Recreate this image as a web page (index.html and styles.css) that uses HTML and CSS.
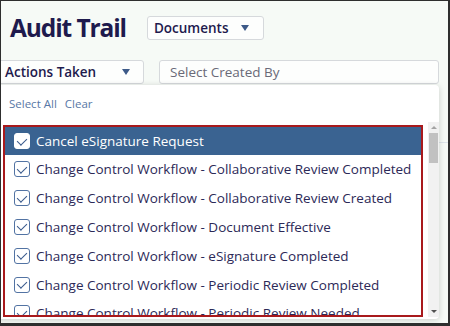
FILE: index.html
```html
<!DOCTYPE html>
<html lang="en">
<head>
  <meta charset="UTF-8" />
  <title>Audit Trail</title>
  <link rel="stylesheet" href="styles.css">
</head>
<body>
  <div class="screen">
    <div class="header">
      <h1>Audit Trail</h1>
      <div class="select select-docs">Documents <span class="caret"></span></div>
    </div>

    <div class="filters">
      <div class="select select-actions">Actions Taken <span class="caret"></span></div>
      <div class="select select-user">Select Created By</div>
    </div>

    <div class="table-line"></div>

    <div class="dropdown">
      <div class="links">
        <a href="#">Select All</a>
        <a href="#">Clear</a>
      </div>
      <div class="list-wrap">
        <ul class="list">
          <li class="active"><span class="box"></span>Cancel eSignature Request</li>
          <li><span class="box"></span>Change Control Workflow - Collaborative Review Completed</li>
          <li><span class="box"></span>Change Control Workflow - Collaborative Review Created</li>
          <li><span class="box"></span>Change Control Workflow - Document Effective</li>
          <li><span class="box"></span>Change Control Workflow - eSignature Completed</li>
          <li><span class="box"></span>Change Control Workflow - Periodic Review Completed</li>
          <li><span class="box"></span>Change Control Workflow - Periodic Review Needed</li>
        </ul>
        <div class="scrollbar">
          <span class="arrow up"></span>
          <span class="thumb"></span>
          <span class="arrow down"></span>
        </div>
      </div>
    </div>
  </div>
</body>
</html>
```

FILE: styles.css
```css
* { box-sizing: border-box; margin: 0; padding: 0; }
body {
  background: #2e2e2e;
  width: 450px;
  height: 326px;
  overflow: hidden;
  font-family: 'Open Sans', sans-serif;
}
.screen {
  position: relative;
  width: 447px;
  height: 322px;
  margin: 1px 2px 3px 1px;
  background: #f6faf6;
  overflow: hidden;
}
.header {
  display: flex;
  align-items: center;
  padding: 9px 0 0 9px;
  height: 44px;
}
h1 {
  font-size: 24.5px;
  font-weight: 700;
  color: #1e1a4d;
  letter-spacing: -1.1px;
  line-height: 32px;
  margin-right: 21px;
}
.select {
  display: flex;
  align-items: center;
  height: 24px;
  background: #fdfefd;
  border: 1px solid #d6d9dc;
  border-radius: 3px;
  font-size: 13.5px;
  color: #1e1a4d;
}
.caret {
  margin-left: auto;
  width: 0;
  height: 0;
  border-left: 4px solid transparent;
  border-right: 4px solid transparent;
  border-top: 6px solid #3d5a88;
}
.select-docs {
  width: 117px;
  padding: 0 14px 0 6px;
  font-weight: 600;
}
.filters {
  display: flex;
  margin-top: 15px;
}
.select-actions {
  width: 149px;
  margin-left: -6px;
  padding: 0 13px 0 9px;
  font-weight: 600;
}
.select-user {
  width: 280px;
  margin-left: 15px;
  padding-left: 10px;
  color: #6a6a78;
}
.table-line {
  position: absolute;
  top: 141px;
  left: 0;
  width: 100%;
  border-top: 1px solid #dde4ea;
}
.dropdown {
  position: absolute;
  top: 84px;
  left: -6px;
  width: 444px;
  height: 234px;
  background: #fff;
  border-radius: 4px;
  box-shadow: 0 1px 6px rgba(0, 0, 0, 0.18);
}
.links {
  display: flex;
  gap: 8px;
  height: 37px;
  padding-left: 14px;
  align-items: center;
  font-size: 11.5px;
}
.links a {
  color: #5878a6;
  text-decoration: none;
}
.list-wrap {
  display: flex;
  height: 195px;
}
.list {
  list-style: none;
  width: 420px;
  height: 192px;
  margin: 3px 0 0 8px;
  border: 2px solid #a8191c;
  overflow: hidden;
}
.list li {
  display: flex;
  align-items: center;
  height: 28.8px;
  padding-left: 9px;
  font-size: 13.5px;
  color: #2c2957;
  white-space: nowrap;
}
.list li.active {
  height: 28px;
  background: #3a6391;
  color: #fff;
}
.box {
  position: relative;
  flex: none;
  width: 16px;
  height: 16px;
  margin-right: 6px;
  border: 1.5px solid #5273a3;
  border-radius: 3px;
  background: #fff;
}
.box::after {
  content: '';
  position: absolute;
  left: 3.5px;
  top: 1.5px;
  width: 5px;
  height: 8px;
  border-right: 1.5px solid #3a5a8c;
  border-bottom: 1.5px solid #3a5a8c;
  transform: rotate(45deg);
}
.active .box {
  border-color: #fff;
}
.scrollbar {
  display: flex;
  flex-direction: column;
  align-items: center;
  width: 11px;
  margin-left: auto;
  background: #f1f1f1;
}
.arrow {
  width: 0;
  height: 0;
  margin: 4px 0;
  border-left: 3px solid transparent;
  border-right: 3px solid transparent;
}
.arrow.up { border-bottom: 3px solid #a3a3a3; }
.arrow.down { margin-top: auto; border-top: 3px solid #505050; }
.thumb {
  width: 9px;
  height: 30px;
  background: #c1c1c1;
}
```
